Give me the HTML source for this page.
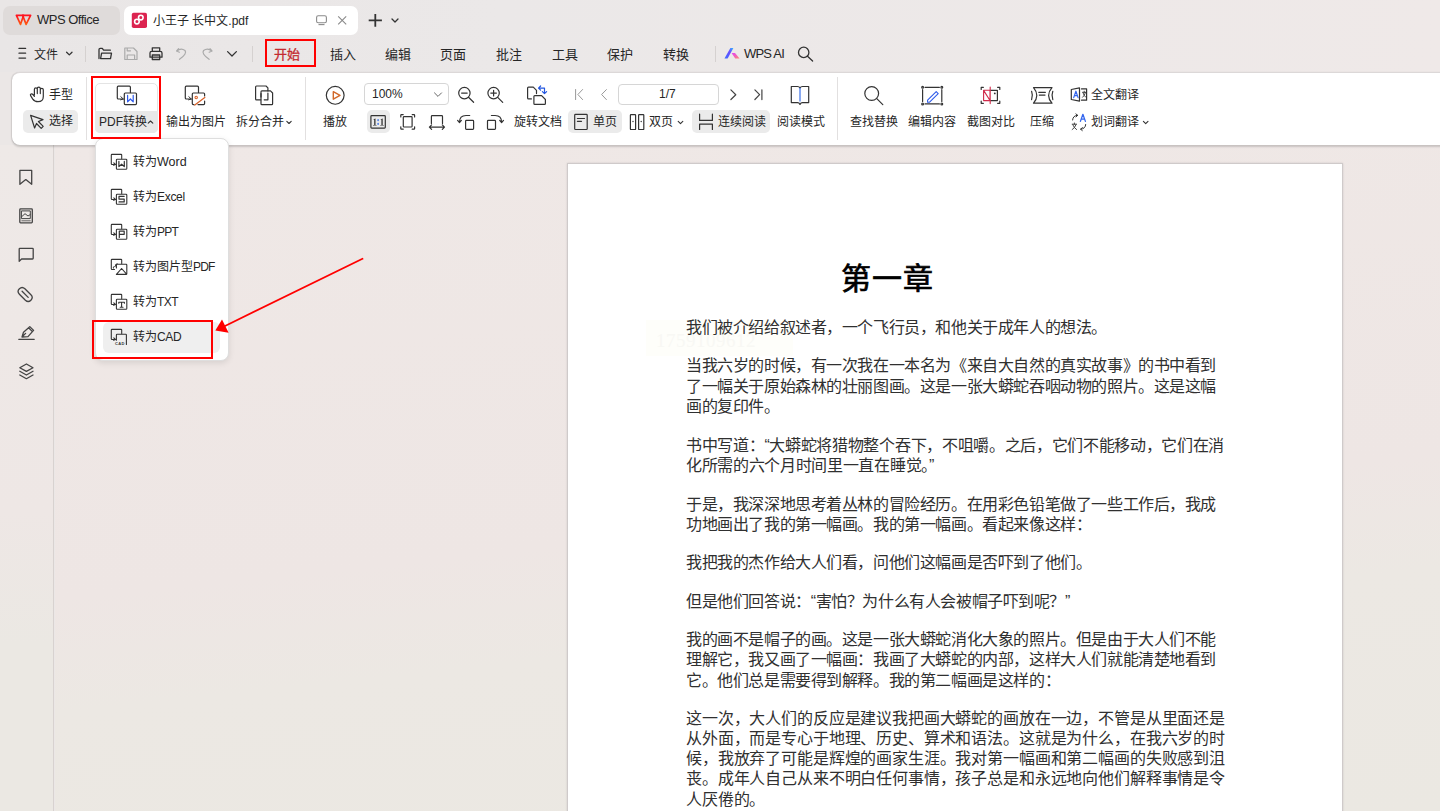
<!DOCTYPE html>
<html lang="zh-CN">
<head>
<meta charset="utf-8">
<style>
*{box-sizing:border-box;margin:0;padding:0}
html,body{width:1440px;height:811px;overflow:hidden}
body{position:relative;font-family:"Liberation Sans",sans-serif;color:#262626;background:#ebe7e6}
.a{position:absolute;white-space:nowrap}
svg{position:absolute;overflow:visible}
.ic{fill:none;stroke:#333;stroke-width:1.3;stroke-linecap:round;stroke-linejoin:round}
#titlebar{position:absolute;left:0;top:0;width:1440px;height:72px;background:linear-gradient(90deg,#e9e6e6 0%,#ebe8e8 35%,#efe9e8 100%)}
.tab{position:absolute;top:6px;height:29px;border-radius:7px}
.mi{position:absolute;top:46px;font-size:13px;line-height:17px;color:#262626}
#ribbon{position:absolute;left:12px;top:72px;width:1440px;height:73px;background:#fff;border-radius:8px 0 0 8px;border-top:1px solid #dcd8d8;box-shadow:0 1.5px 2px rgba(0,0,0,.16),-0.5px 0 1px rgba(0,0,0,.08)}
.rl{position:absolute;font-size:12px;line-height:14px;color:#262626}
.sep{position:absolute;width:1px;background:#e2e0e0}
.btnbg{position:absolute;background:#ebebeb;border-radius:5px}
#side{position:absolute;left:0;top:145px;width:54px;height:666px;border-right:1px solid #d8d2d0;background:linear-gradient(180deg,#eee9e7 0%,#eee7e5 55%,#ebe8e3 75%,#ebe8e3 100%)}
#main{position:absolute;left:55px;top:145px;width:1385px;height:666px;background:linear-gradient(174deg,#efe8e6 0%,#eee6e4 56%,#ece8e3 70%,#ebe8e2 100%)}
#page{position:absolute;left:567px;top:163px;width:776px;height:700px;background:#fff;border:1px solid #cfcaca;box-shadow:0 0 2px rgba(0,0,0,.12)}
.tl{position:absolute;left:686px;font-size:16px;letter-spacing:-0.41px;line-height:18px;color:#303030;white-space:nowrap}
#dd{position:absolute;left:95px;top:138px;width:134px;height:223px;background:#fff;border-radius:8px;border:1px solid #dedede;box-shadow:0 2px 6px rgba(0,0,0,.10)}
.di{position:absolute;left:133px;font-size:12px;line-height:14px;color:#262626}
.red{position:absolute;border:2px solid #ff0000}
</style>
</head>
<body>
<div id="titlebar"></div>
<!-- tabs -->
<div class="tab" style="left:3px;width:117px;background:#dfdbda"></div>
<div class="tab" style="left:124px;width:234px;background:#fff"></div>
<div class="a" style="left:37px;top:11px;font-size:13px;line-height:17px;color:#262626;letter-spacing:-0.5px">WPS Office</div>
<div class="a" style="left:153px;top:13px;font-size:12px;line-height:16px;color:#262626">小王子 长中文.pdf</div>

<!-- menu -->
<div class="mi" style="left:34px;font-size:12px;top:46.5px">文件</div>
<div class="mi" style="left:273.5px;color:#c42a30;-webkit-text-stroke:0.3px #c42a30">开始</div>
<div class="mi" style="left:330px">插入</div>
<div class="mi" style="left:385px">编辑</div>
<div class="mi" style="left:440px">页面</div>
<div class="mi" style="left:496px">批注</div>
<div class="mi" style="left:552px">工具</div>
<div class="mi" style="left:607px">保护</div>
<div class="mi" style="left:663px">转换</div>
<div class="a" style="left:744px;top:45px;font-size:13px;line-height:18px;letter-spacing:-0.8px">WPS AI</div>
<div class="sep" style="left:85px;top:46px;height:16px;background:#d5d1d0"></div>
<div class="sep" style="left:252px;top:46px;height:16px;background:#d5d1d0"></div>
<div class="sep" style="left:715px;top:46px;height:16px;background:#d5d1d0"></div>


<!-- titlebar icons -->
<svg style="left:0;top:0" width="420" height="72">
 <defs><linearGradient id="wg" x1="0" y1="0" x2="0" y2="1"><stop offset="0" stop-color="#ff1020"/><stop offset="1" stop-color="#ff5a10"/></linearGradient>
 <linearGradient id="aig1" x1="0" y1="1" x2="1" y2="0"><stop offset="0" stop-color="#3b6cff"/><stop offset="0.6" stop-color="#6a4dff"/><stop offset="1" stop-color="#2fb6ff"/></linearGradient>
 <linearGradient id="aig2" x1="0" y1="0" x2="1" y2="1"><stop offset="0" stop-color="#e23cff"/><stop offset="1" stop-color="#ff8a70"/></linearGradient></defs>
 <g fill="none" stroke="url(#wg)" stroke-width="1.7" stroke-linejoin="round">
  <path d="M16.4,15.3 H23.6 L20.5,24.4 Z"/><path d="M22.6,15.3 H30.6 L26.1,24.4 Z"/>
 </g>
 <rect x="131.8" y="12.7" width="15.2" height="15.3" rx="1.8" fill="#dc2450"/>
 <g fill="none" stroke="#fff" stroke-width="1.6"><circle cx="140.8" cy="17.6" r="2.3"/><circle cx="136.9" cy="21.6" r="2.3"/></g>
 <g fill="none" stroke="#8a8a8a" stroke-width="1.1">
  <rect x="316.6" y="15.8" width="9.8" height="7" rx="1.6"/><path d="M318.5,24.6 H324.5"/>
  <path d="M338.2,16.3 L346.2,24.4 M346.2,16.3 L338.2,24.4"/>
 </g>
 <g fill="none" stroke="#333" stroke-width="1.8" stroke-linecap="butt"><path d="M375.3,13.9 V26.8 M368.7,20.3 H381.9"/></g>
 <g fill="none" stroke="#333" stroke-width="1.3" stroke-linecap="round" stroke-linejoin="round"><path d="M392,19 L395,22 L398,19"/></g>
 <!-- menu -->
 <g fill="none" stroke="#333" stroke-width="1.3" stroke-linecap="round" stroke-linejoin="round">
  <path d="M19,48.4 H25.6 M19,53.2 H25.6 M19,58.1 H25.6"/>
  <path d="M66.6,52.2 L69.3,54.9 L72,52.2"/>
  <path d="M99,58.5 V49.6 Q99,48.4 100.2,48.4 H102.3 L103.6,50.2 H110.4 M100.6,58.6 L101.6,53.2 H111.5 L110.5,58.6 Z"/>
  <path d="M150,53 Q150,51.3 151.7,51.3 H160.3 Q162,51.3 162,53 V57.2 H150 Z M152.3,51.3 V47.8 H159.7 V51.3 M152.3,55 H159.7 V59.5 H152.3 Z"/>
  <path d="M227.6,51.6 L232,56 L236.4,51.6"/>
 </g>
 <g fill="none" stroke="#aaa" stroke-width="1.2" stroke-linecap="round" stroke-linejoin="round">
  <path d="M124.8,48 H133.5 L137,51.5 V59.5 H124.8 Z M127.2,59.5 V55 H134.6 V59.5 M127.2,48 V50.8 H130.5"/>
  <path d="M176.6,51 L178.6,48.6 M176.6,51 L179.4,52.2 M176.8,51 Q181,47.5 185,50.5 Q187.5,53.5 179.5,59.3"/>
  <path d="M212,51 L210,48.6 M212,51 L209.2,52.2 M211.8,51 Q207.6,47.5 203.6,50.5 Q201.1,53.5 209.1,59.3"/>
 </g>
</svg>
<svg style="left:0;top:0" width="820" height="72">
 <path d="M724.5,58.6 L730.4,47.9 H733.4 L727.6,58.6 Z" fill="url(#aig1)"/>
 <path d="M731.6,52.9 H735 L739.6,58.6 H735.2 Z" fill="url(#aig2)"/>
 <g fill="none" stroke="#333" stroke-width="1.3" stroke-linecap="round"><circle cx="803.7" cy="52.4" r="5.2"/><path d="M807.5,56.2 L812.6,61"/></g>
</svg>

<div id="side"></div>
<div id="main"></div>
<div id="page"></div>

<div id="ribbon"></div>
<div class="sep" style="left:86px;top:77px;height:63px"></div>
<div class="sep" style="left:305px;top:77px;height:63px"></div>
<div class="sep" style="left:837px;top:77px;height:63px"></div>

<!-- ribbon labels -->
<div class="btnbg" style="left:23px;top:110px;width:55px;height:23px"></div>
<div class="btnbg" style="left:95px;top:83px;width:63px;height:50px;background:#fff;border:1px solid #e4e4e4"></div>
<div class="btnbg" style="left:95px;top:111px;width:63px;height:22px;border-radius:0 0 5px 5px;background:#e8e8e8"></div>
<div class="btnbg" style="left:367px;top:110px;width:23px;height:23px"></div>
<div class="btnbg" style="left:568px;top:110px;width:54px;height:23px"></div>
<div class="btnbg" style="left:692px;top:110px;width:78px;height:23px"></div>

<div class="rl" style="left:49px;top:88px">手型</div>
<div class="rl" style="left:49px;top:114px">选择</div>
<div class="rl" style="left:99px;top:115px">PDF转换</div>
<div class="rl" style="left:166px;top:115px">输出为图片</div>
<div class="rl" style="left:236px;top:115px">拆分合并</div>
<div class="rl" style="left:323px;top:115px">播放</div>
<div class="rl" style="left:514px;top:115px">旋转文档</div>
<div class="rl" style="left:593px;top:115px">单页</div>
<div class="rl" style="left:649px;top:115px">双页</div>
<div class="rl" style="left:718px;top:115px">连续阅读</div>
<div class="rl" style="left:777px;top:115px">阅读模式</div>
<div class="rl" style="left:850px;top:115px">查找替换</div>
<div class="rl" style="left:908px;top:115px">编辑内容</div>
<div class="rl" style="left:967px;top:115px">截图对比</div>
<div class="rl" style="left:1030px;top:115px">压缩</div>
<div class="rl" style="left:1091px;top:88px">全文翻译</div>
<div class="rl" style="left:1091px;top:115px">划词翻译</div>

<!-- zoom box & page box -->
<div class="a" style="left:364px;top:83px;width:85px;height:22px;border:1px solid #d6d6d6;border-radius:4px"></div>
<div class="a" style="left:372px;top:87px;font-size:12px;line-height:14px">100%</div>
<div class="a" style="left:618px;top:84px;width:101px;height:21px;border:1px solid #d6d6d6;border-radius:4px"></div>
<div class="a" style="left:659px;top:87px;font-size:12px;line-height:14px">1/7</div>

<!-- document text -->
<!-- doc lines -->
<div class="a" style="left:646px;top:320px;width:147px;height:36px;background:#fefefa"></div><div class="a" style="left:656px;top:331px;font-family:'Liberation Serif',serif;font-size:19px;line-height:20px;color:#f8f8f4;letter-spacing:0.5px">1759109612</div>
<div class="tl" style="top:319.0px">我们被介绍给叙述者，一个飞行员，和他关于成年人的想法。</div>
<div class="tl" style="top:357.0px">当我六岁的时候，有一次我在一本名为《来自大自然的真实故事》的书中看到</div>
<div class="tl" style="top:377.5px">了一幅关于原始森林的壮丽图画。这是一张大蟒蛇吞咽动物的照片。这是这幅</div>
<div class="tl" style="top:397.5px">画的复印件。</div>
<div class="tl" style="top:436.7px;letter-spacing:-0.32px">书中写道：“大蟒蛇将猎物整个吞下，不咀嚼。之后，它们不能移动，它们在消</div>
<div class="tl" style="top:457.0px;letter-spacing:-0.32px">化所需的六个月时间里一直在睡觉。”</div>
<div class="tl" style="top:495.6px">于是，我深深地思考着丛林的冒险经历。在用彩色铅笔做了一些工作后，我成</div>
<div class="tl" style="top:516.0px">功地画出了我的第一幅画。我的第一幅画。看起来像这样：</div>
<div class="tl" style="top:553.6px">我把我的杰作给大人们看，问他们这幅画是否吓到了他们。</div>
<div class="tl" style="top:593.0px">但是他们回答说：“害怕？为什么有人会被帽子吓到呢？”</div>
<div class="tl" style="top:631.0px">我的画不是帽子的画。这是一张大蟒蛇消化大象的照片。但是由于大人们不能</div>
<div class="tl" style="top:651.0px">理解它，我又画了一幅画：我画了大蟒蛇的内部，这样大人们就能清楚地看到</div>
<div class="tl" style="top:671.7px">它。他们总是需要得到解释。我的第二幅画是这样的：</div>
<div class="tl" style="top:709.5px;letter-spacing:-0.15px">这一次，大人们的反应是建议我把画大蟒蛇的画放在一边，不管是从里面还是</div>
<div class="tl" style="top:730.0px;letter-spacing:-0.15px">从外面，而是专心于地理、历史、算术和语法。这就是为什么，在我六岁的时</div>
<div class="tl" style="top:749.5px;letter-spacing:-0.15px">候，我放弃了可能是辉煌的画家生涯。我对第一幅画和第二幅画的失败感到沮</div>
<div class="tl" style="top:770.0px;letter-spacing:-0.15px">丧。成年人自己从来不明白任何事情，孩子总是和永远地向他们解释事情是令</div>
<div class="tl" style="top:791.0px;letter-spacing:-0.15px">人厌倦的。</div>
<div class="a" style="left:841px;top:262px;font-size:30px;line-height:34px;color:#000;-webkit-text-stroke:0.7px #000;letter-spacing:1px">第一章</div>

<!-- dropdown -->
<div id="dd"></div>
<div class="btnbg" style="left:103px;top:322px;width:117px;height:31px;background:#efefef;border-radius:6px"></div>
<div class="di" style="top:155px">转为<span style="font-size:12.5px">Word</span></div>
<div class="di" style="top:190px">转为<span style="letter-spacing:-0.3px">Excel</span></div>
<div class="di" style="top:225px">转为<span style="letter-spacing:-0.8px">PPT</span></div>
<div class="di" style="top:260px">转为图片型<span style="letter-spacing:-0.8px">PDF</span></div>
<div class="di" style="top:295px">转为<span style="letter-spacing:-0.6px">TXT</span></div>
<div class="di" style="top:330px">转为<span style="letter-spacing:-0.3px">CAD</span></div>

<svg style="left:0;top:0" width="1440" height="400">
 <g fill="none" stroke="#333" stroke-width="1.2" stroke-linecap="round" stroke-linejoin="round">
  <!-- hand -->
  <path d="M34.4,95 V89.2 Q34.4,87.9 35.9,87.9 Q37.3,87.9 37.3,89.2 V93.6 M37.3,93.6 V88.5 Q37.3,87.2 38.8,87.2 Q40.3,87.2 40.3,88.5 V93.6 M40.3,93.6 V89.7 Q40.3,88.4 41.8,88.4 Q43.3,88.4 43.3,89.7 V96.5 Q43.3,101.7 38,101.7 Q34.6,101.7 32.6,98.8 L30.6,95.7 Q30,94.6 31,94 Q32,93.5 32.9,94.5 L34.4,96.3"/>
  <!-- cursor -->
  <path d="M30.6,115.4 L43,119.6 L38.4,121.5 L43.2,126.3 L41.2,128.3 L36.5,123.5 L34.6,128 Z"/>
  <!-- PDF convert -->
  <path d="M130.4,92.5 V87.2 Q130.4,86.2 129.4,86.2 H118.3 Q117.3,86.2 117.3,87.2 V98 Q117.3,99 118.3,99 H123.3"/>
  <path d="M120.8,96.7 L123.3,99 L120.6,99.8" stroke-width="1"/>
  <rect x="124.3" y="93" width="12.2" height="11.6" rx="1"/>
  <!-- export image -->
  <path d="M198.5,92.5 V87.2 Q198.5,86.2 197.5,86.2 H186.3 Q185.3,86.2 185.3,87.2 V98 Q185.3,99 186.3,99 H191.3"/>
  <path d="M188.8,96.7 L191.3,99 L188.6,99.8" stroke-width="1"/>
  <path d="M204.6,96 V94 Q204.6,93 203.6,93 H193.3 Q192.3,93 192.3,94 V103.6 Q192.3,104.6 193.3,104.6 H194 M198,104.6 H203.6 Q204.6,104.6 204.6,103.6 V101"/>
  <!-- split merge -->
  <path d="M260.8,99.8 H256.5 Q255.6,99.8 255.6,98.9 V86.9 Q255.6,86 256.5,86 H266 L267.9,87.9 V90.9"/>
  <path d="M261,91.8 Q261,90.9 261.9,90.9 H270.5 L272.6,93 V103.8 Q272.6,104.7 271.7,104.7 H261.9 Q261,104.7 261,103.8 Z"/>
  <path d="M267.9,93 V99.8 H264.2 M261,93.5 V97"/>
  <!-- chevrons -->
  <path d="M148.2,123.2 L150.5,121 L152.8,123.2" stroke-width="1.1"/>
  <path d="M286.8,121.3 L289,123.5 L291.2,121.3" stroke-width="1.1"/>
  <path d="M678.2,121.3 L680.5,123.6 L682.8,121.3" stroke-width="1.1"/>
  <path d="M1143.4,121.3 L1145.7,123.7 L1148,121.3" stroke-width="1.1"/>
  <!-- play -->
  <circle cx="335.2" cy="95.35" r="8.9"/>
  <!-- zoom out/in -->
  <circle cx="464.4" cy="93.1" r="5.7"/><path d="M468.5,97.3 L473.6,102.3 M461.6,93.1 H467.2"/>
  <circle cx="493.6" cy="93.1" r="5.7"/><path d="M497.7,97.3 L502.7,102.3 M490.8,93.1 H496.4 M493.6,90.3 V95.9"/>
  <!-- rotate doc -->
  <path d="M531.4,98.9 H528.5 Q527.6,98.9 527.6,98 V88 Q527.6,87.1 528.5,87.1 H533.3 L536.5,90.3 V93.6"/>
  <path d="M533.9,103.4 V96.6 Q533.9,95.7 534.8,95.7 H541.6 L545.4,99.5 V103.4 Q545.4,104.3 544.5,104.3 H534.8 Q533.9,104.3 533.9,103.4 Z"/>
  <!-- 1:1 -->
  <rect x="370.9" y="115.7" width="14.4" height="12.4" rx="0.8"/>
  <!-- fit page -->
  <rect x="403.3" y="116.6" width="8.8" height="10.4" rx="0.8"/>
  <path d="M400.8,117 V115.2 Q400.8,114.6 401.4,114.6 H403.2 M412.2,114.6 H414 Q414.6,114.6 414.6,115.2 V117 M414.6,126.8 V128.6 Q414.6,129.2 414,129.2 H412.2 M403.2,129.2 H401.4 Q400.8,129.2 400.8,128.6 V126.8"/>
  <!-- fit width -->
  <path d="M431.4,123.4 V116.4 Q431.4,115.6 432.2,115.6 H441.7 Q442.5,115.6 442.5,116.4 V123.4 M429.4,127.1 H444.5 M431.6,124.9 L429.4,127.1 L431.6,129.3 M442.3,124.9 L444.5,127.1 L442.3,129.3"/>
  <!-- rotate left/right -->
  <rect x="465.6" y="120.4" width="8" height="9" rx="0.8"/>
  <path d="M469.7,115.5 H466 Q459.5,115.5 459.5,122.3 M457.6,120.4 L459.5,122.5 L461.4,120.4"/>
  <rect x="487.5" y="120.4" width="8" height="9" rx="0.8"/>
  <path d="M491.4,115.5 H495.1 Q501.6,115.5 501.6,122.3 M499.7,120.4 L501.6,122.5 L503.5,120.4"/>
  <!-- nav -->
  <path d="M730.9,89.9 L735.8,94.7 L730.9,99.5 M754.9,89.9 L759.6,94.7 L754.9,99.5 M761.9,89.8 V99.6" stroke="#444"/>
  <!-- book -->
  <path d="M791.3,86.5 H797.5 Q799.3,86.5 800,88 Q800.7,86.5 802.5,86.5 H808.7 V102.6 H802.5 Q800.8,102.6 800,104.4 Q799.2,102.6 797.5,102.6 H791.3 Z"/>
  <!-- single page -->
  <rect x="574.7" y="114.4" width="12.5" height="15.1" rx="0.8"/>
  <path d="M577.4,118.5 H584.5 M577.4,121.3 H581.5"/>
  <!-- double page -->
  <rect x="630.4" y="114.6" width="5.2" height="14.9" rx="0.6"/><rect x="638.6" y="114.6" width="5.2" height="14.9" rx="0.6"/>
  <!-- continuous -->
  <path d="M699.6,114.2 V120.4 H712.4 V114.2 M699.6,129.4 V124.1 H712.4 V129.4"/>
  <!-- search -->
  <circle cx="871.7" cy="93.5" r="6.9"/><path d="M876.8,98.7 L882.8,104.7"/>
  <!-- edit content -->
  <path d="M925,87.3 H939.4 M925,103.9 H939.4 M922.6,89.7 V101.5 M941.8,89.7 V101.5"/>
  <circle cx="922.6" cy="87.3" r="0.9"/><circle cx="941.8" cy="87.3" r="0.9"/><circle cx="922.6" cy="103.9" r="0.9"/><circle cx="941.8" cy="103.9" r="0.9"/>
  <!-- screenshot compare -->
  <path d="M981.2,89.4 V87.3 H983.4 M997.6,87.3 H999.8 V89.4 M999.8,101.2 V103.3 H997.6 M983.4,103.3 H981.2 V101.2"/>
  <path d="M990.6,90.3 H997.4 V100.6 H990.6"/>
  <!-- compress -->
  <path d="M1033.5,87.7 H1052 Q1048.6,91.5 1048.6,95.4 Q1048.6,99.3 1052,103.2 H1033.5 Q1036.8,99.3 1036.8,95.4 Q1036.8,91.5 1033.5,87.7 Z"/>
  <path d="M1031.6,91.3 Q1033.2,95.4 1031.6,99.6 M1052.8,91.3 Q1051.2,95.4 1052.8,99.6 M1038.8,92.3 H1045.4 M1039.3,95.1 H1045"/>
  <!-- translate full -->
  <path d="M1071.3,89.5 L1079.5,87.9 V101.1 L1071.3,99.5 Z"/>
  <path d="M1081.5,88.9 H1086.6 V100.2 H1081.5"/>
  <!-- translate word arrows -->
  <path d="M1072.6,120 Q1072.8,115.5 1077.6,115.3 M1075.9,113.9 L1077.7,115.3 L1076,116.9" stroke-width="1"/>
  <path d="M1085.7,124.5 Q1085.5,128.9 1080.7,129.2 M1082.4,127.6 L1080.6,129.2 L1082.3,130.6" stroke-width="1"/>
 </g>
 <!-- colored bits -->
 <g fill="none" stroke-linecap="round" stroke-linejoin="round">
  <path d="M127.6,95.4 V101.8 L130.4,99 L133.2,101.8 V95.4" stroke="#2f5bea" stroke-width="1.2"/>
  <circle cx="196.2" cy="97.5" r="1.2" stroke="#d8622a" stroke-width="1.1"/>
  <path d="M194.8,105 L204.8,97.4" stroke="#d8622a" stroke-width="1.3"/>
  <path d="M333.3,91.7 L340,95.4 L333.3,99.2 Z" stroke="#d2692a" stroke-width="1.4"/>
  <path d="M538.6,88.1 H544.5 V93.6 M540.6,86 L538.5,88.1 L540.6,90.2 M542.4,91.6 L544.5,93.7 L546.6,91.6" stroke="#2457e0" stroke-width="1.2"/>
  <path d="M378.1,119.7 V120.5 M378.1,123.4 V124.2" stroke="#2f6be8" stroke-width="1.4"/>
  <path d="M800,88.3 V101" stroke="#4a7bea" stroke-width="1.3"/>
  <path d="M927.6,100.2 L936.2,91.6 L938.2,93.6 L929.6,102.2 L927.6,102.2 Z" stroke="#2f5bea" stroke-width="1.1"/>
  <path d="M983.6,90.3 V100.6 H990 V90.3 Z M983.8,90.6 L989.8,100.3 M990.2,87 V103.6" stroke="#d02a4a" stroke-width="1.1"/>
 </g>
 <g fill="#999" stroke="#999" stroke-width="1" stroke-linecap="round" fill-opacity="0">
  <path d="M575.6,89.5 V99.6 M582.6,89.5 L577.9,94.5 L582.6,99.6 M606.4,89.6 L601.6,94.5 L606.4,99.6"/>
 </g>
 <g fill="#333">
  <path d="M374.2,119 L375.5,118.6 V125 H376.6 V125.6 H373 V125 H374.2 V119.8 L373.2,120.1 Z"/>
  <path d="M381.4,119 L382.7,118.6 V125 H383.8 V125.6 H380.2 V125 H381.4 V119.8 L380.4,120.1 Z"/>
  <circle cx="994.8" cy="93.4" r="0.9"/>
  <circle cx="633" cy="121.5" r="0.7"/><circle cx="641.2" cy="121.5" r="0.7"/>
 </g>
 <g fill="none" stroke="#666" stroke-width="1"><path d="M434.2,92.6 L438,96.4 L441.8,92.6"/></g>
 <g fill="none" stroke-linecap="round" stroke-linejoin="round">
  <path d="M1073.7,97.6 L1075.9,91.2 L1078.1,97.6 M1074.5,95.6 H1077.3" stroke="#3366ee" stroke-width="1.2"/>
  <path d="M1082.6,92.3 H1085.8 M1084.2,91.2 V92.3 M1083,92.8 Q1084,96 1085.8,97.3 M1085.4,92.8 Q1084.4,96 1082.6,97.3" stroke="#333" stroke-width="0.9"/>
  <path d="M1080.4,121.4 L1082.9,114.3 L1085.4,121.4 M1081.3,119.2 H1084.5" stroke="#3366ee" stroke-width="1.3"/>
  <path d="M1072.2,124.2 H1076.6 M1074.4,123 V124.2 M1072.8,124.8 Q1074,128 1076.6,129.6 M1076,124.8 Q1074.8,128 1072.2,129.6" stroke="#333" stroke-width="0.9"/>
 </g>
 <!-- sidebar -->
 <g fill="none" stroke="#444" stroke-width="1.3" stroke-linejoin="round" stroke-linecap="round">
  <path d="M19.9,170.4 H31.7 V184.3 L25.8,179.6 L19.9,184.3 Z"/>
  <rect x="19.8" y="208.9" width="12.5" height="14" rx="0.8"/>
  <path d="M21.8,210.9 H30.3 V218.6 H21.8 Z M21.9,216.5 L25,213.7 L28,216 L30.2,214.6" stroke-width="1"/>
  <path d="M21.8,220.8 H30.3" stroke-width="0.8"/>
  <path d="M19.2,261.3 V249 Q19.2,248.3 19.9,248.3 H32.5 Q33.2,248.3 33.2,249 V258.3 Q33.2,259 32.5,259 H21.6 Z"/>
  <path d="M30.9,294.8 L24.9,288.8 Q22.1,286.1 19.4,288.8 Q16.7,291.5 19.4,294.2 L25.4,300.2 Q28.2,302.8 30.9,300.2 Q33.6,297.5 30.9,294.8 Z M28.2,297.4 L22.1,291.3" />
  <path d="M18.8,339.3 H34.2"/>
  <path d="M22,337 L23.5,332.2 L28.6,327.8 L32.4,331.6 L28,336.7 Z M28.6,327.8 L29.8,326.6 L33.6,330.4 L32.4,331.6 M22.2,336.8 L25.6,333.4"/>
  <path d="M26.4,364 L33,367.7 L26.4,371.4 L19.8,367.7 Z M19.8,371.3 L26.4,375 L33,371.3 M19.8,375 L26.4,378.7 L33,375"/>
 </g>

 <!-- dropdown icons -->
 <g fill="none" stroke="#333" stroke-width="1.1" stroke-linecap="round" stroke-linejoin="round">
  <g id="dback"><path d="M121.7,158.6 V155.1 Q121.7,154.4 121,154.4 H112 Q111.3,154.4 111.3,155.1 V163.8 Q111.3,164.5 112,164.5 H115.5 M113.8,162.9 L115.5,164.5 L113.6,165.2"/>
  <rect x="116.4" y="159.2" width="10.4" height="10" rx="0.8"/></g>
  <use href="#dback" y="35"/><use href="#dback" y="70"/><use href="#dback" y="140"/>
  <path d="M121.7,263.6 V260.1 Q121.7,259.4 121,259.4 H112 Q111.3,259.4 111.3,260.1 V268.8 Q111.3,269.5 112,269.5 H114.5"/>
  <path d="M116.4,268 V265 Q116.4,264.3 117.1,264.3 H126.1 Q126.8,264.3 126.8,265 V273.7 Q126.8,274.4 126.1,274.4 H116.4 L121.6,268.5 L126.6,274.2"/>
  <path d="M113.4,268.2 Q112.6,266.4 114.4,266.6 Q116.2,266.8 115.6,265 M115.6,265 Q115.6,263.6 117.4,263.8" stroke-width="0.9"/>
  <path d="M121.7,333.6 V330.1 Q121.7,329.4 121,329.4 H112 Q111.3,329.4 111.3,330.1 V338.8 Q111.3,339.5 112,339.5 H115.5 M113.8,337.9 L115.5,339.5 L113.6,340.2"/>
  <path d="M116.4,340.3 V335 Q116.4,334.3 117.1,334.3 H125.7 Q126.4,334.3 126.4,335 V344.4"/>
 </g>
 <g fill="none" stroke="#333" stroke-width="1" stroke-linecap="round" stroke-linejoin="round">
  <path d="M118.9,161.4 V166.6 L121.6,164.2 L124.3,166.6 V161.4" stroke-width="1.2"/>
  <path d="M124.2,196.3 H119 V199.1 H124.2 V201.9 H119" stroke-width="1.2"/>
  <path d="M119.3,237.4 V231.2 H124.2 V234.3 H119.3" stroke-width="1.2"/>
  <path d="M118.8,302.2 H124.4 M121.6,302.2 V307.3 M120.2,307.3 H123 M118.8,302.2 V303.3 M124.4,302.2 V303.3" stroke-width="1.1"/>
 </g>
 <text x="115" y="344.9" font-family="Liberation Sans" font-size="4" font-weight="bold" fill="#333" letter-spacing="0.3">CAD</text>
</svg>

<!-- red highlight boxes -->
<div class="red" style="left:265px;top:39px;width:51px;height:28px"></div>
<div class="red" style="left:91px;top:75.5px;width:70px;height:63px"></div>
<div class="red" style="left:92px;top:320px;width:121px;height:39px"></div>
<svg style="left:0;top:0" width="1440" height="811"><line x1="362.5" y1="258.8" x2="223" y2="327" stroke="#f00" stroke-width="1.8" stroke-linecap="round"/><polygon points="215.3,330.6 222,319.4 228.6,332.8" fill="#f00"/></svg>
</body>
</html>
